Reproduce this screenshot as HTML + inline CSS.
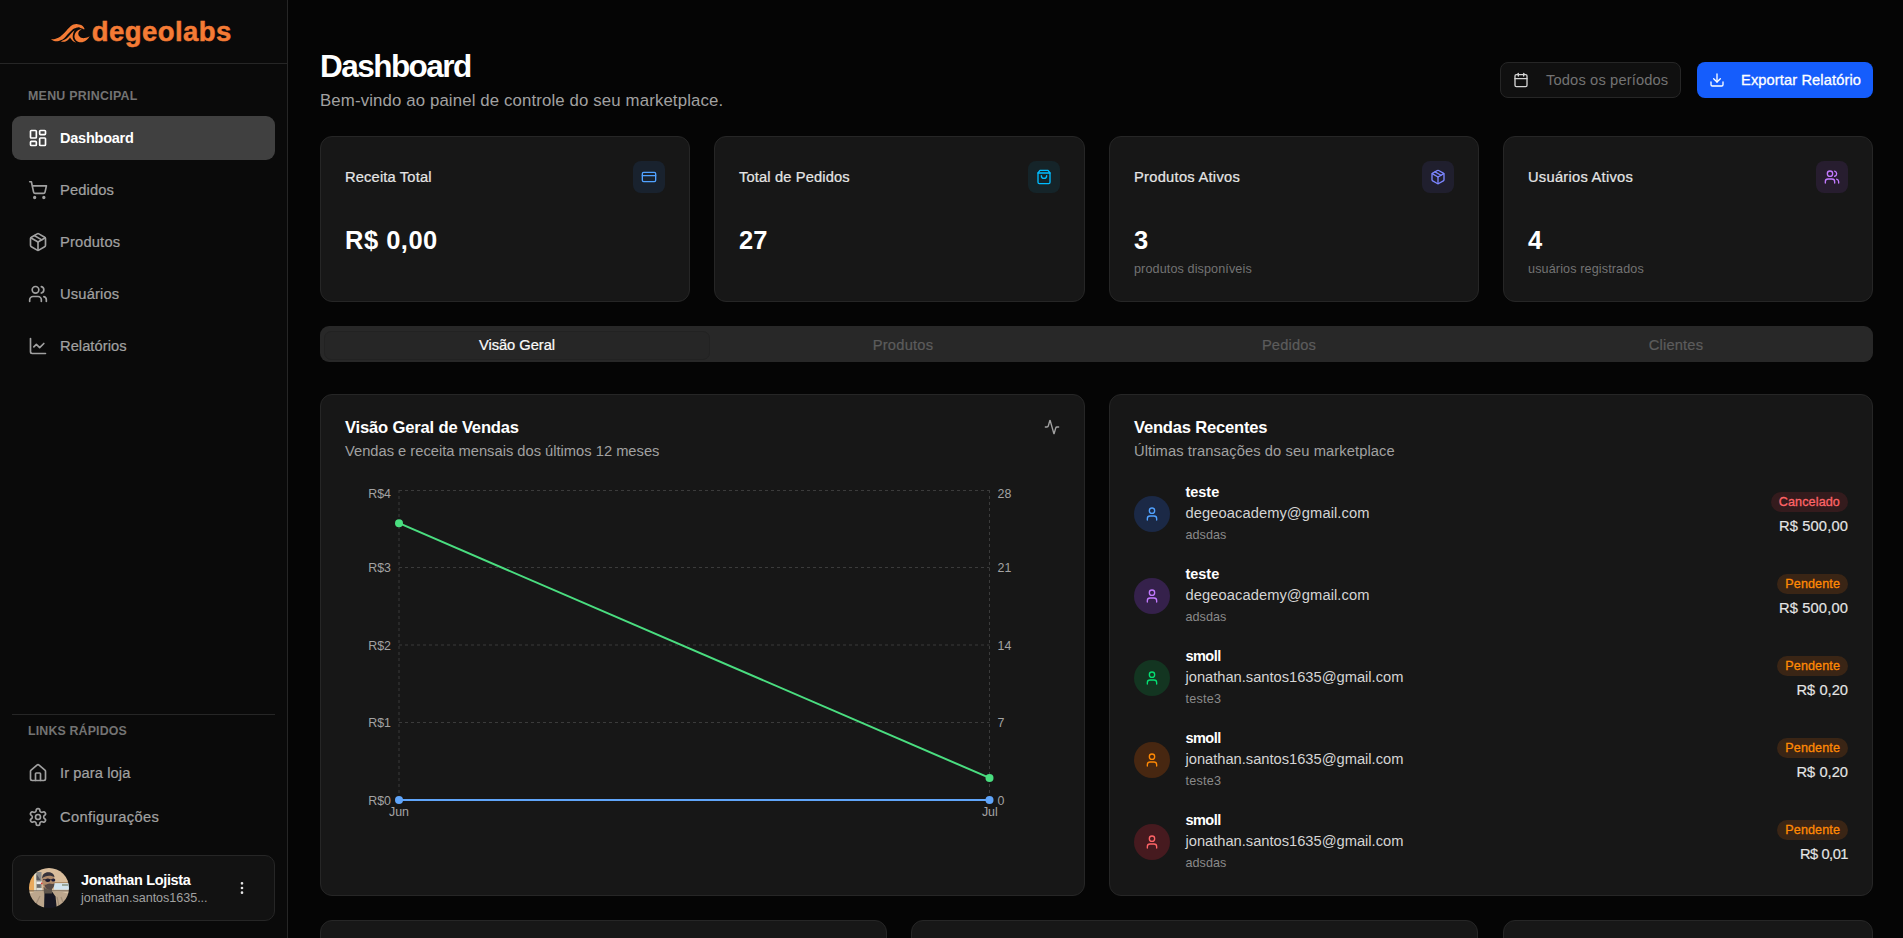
<!DOCTYPE html>
<html lang="pt-BR">
<head>
<meta charset="utf-8">
<title>Dashboard - degeolabs</title>
<style>
*{box-sizing:border-box;margin:0;padding:0}
html,body{width:1903px;height:938px;overflow:hidden;background:#050505}
body{font-family:"Liberation Sans",sans-serif;color:#fafafa;position:relative;-webkit-font-smoothing:antialiased}
.abs,.t{position:absolute;white-space:nowrap}
.t{line-height:20px}
svg.ic{position:absolute;fill:none;stroke:currentColor;stroke-width:2;stroke-linecap:round;stroke-linejoin:round}
#sidebar{position:absolute;left:0;top:0;width:288px;height:938px;background:#0a0a0a;border-right:1px solid #262626}
#sidebar .hdr{position:absolute;left:0;top:0;width:287px;height:64px;border-bottom:1px solid #262626}
.sec{font-size:12.4px;font-weight:700;color:#737373;line-height:16px}
.med{-webkit-text-stroke:.3px currentColor}
.nav{font-size:14.7px;font-weight:400;color:#a1a1a1;line-height:20px;-webkit-text-stroke:.22px currentColor}
.nav.on{color:#fff;font-size:14.5px;font-weight:700;-webkit-text-stroke:0}
.navic{color:#a1a1a1}
.card{position:absolute;background:#171717;border:1px solid #262626;border-radius:12px}
.muted{color:#a1a1a1}
.ib{width:32px;height:32px;border-radius:8px}
.st{font-size:14.7px;font-weight:400;color:#e5e5e5;-webkit-text-stroke:.22px currentColor}
.sv{font-size:25.5px;font-weight:700;color:#fff;line-height:32px}
.sd{font-size:12.6px;color:#737373;line-height:16px}
.tab{font-size:14.7px;font-weight:400;color:#5c5c5c;-webkit-text-stroke:.22px currentColor;transform:translateX(-50%)}
.tab.on{color:#fafafa}
.ct{font-size:16.6px;font-weight:700;color:#fff;line-height:24px}
.cs{font-size:14.7px;color:#a1a1a1}
.rn{font-size:14.5px;font-weight:700;color:#fff}
.re{font-size:14.7px;color:#d4d4d4}
.rd{font-size:12.6px;color:#8a8a8a;line-height:16px}
.bd{font-size:12.6px;font-weight:400;-webkit-text-stroke:.3px currentColor;line-height:20px;height:20px;padding:0 8px;border-radius:10px}
.bd.c{color:#ff6467;background:#341b1d}
.bd.p{color:#ff8904;background:#3a2515}
.ra{font-size:14.7px;color:#e5e5e5;-webkit-text-stroke:.15px currentColor}
/*FIT*/
#lg{letter-spacing:0.448px}
#sec1{letter-spacing:0.278px}
#n1{letter-spacing:-0.231px}
#n2{letter-spacing:0.137px}
#n3{letter-spacing:0.186px}
#n4{letter-spacing:0.176px}
#n5{letter-spacing:0.042px}
#sec2{letter-spacing:0.143px}
#n6{letter-spacing:0.090px}
#n7{letter-spacing:0.340px}
#un{letter-spacing:-0.361px}
#ue{letter-spacing:-0.041px}
#h1{letter-spacing:-1.529px}
#sub{letter-spacing:0.133px}
#per{letter-spacing:0.136px}
#exp{letter-spacing:0.090px}
#s1{letter-spacing:0.155px}
#v1{letter-spacing:0.498px}
#s2{letter-spacing:0.139px}
#v2{letter-spacing:0.025px}
#s3{letter-spacing:0.267px}
#v3{letter-spacing:0.000px}
#d3{letter-spacing:0.115px}
#s4{letter-spacing:0.255px}
#v4{letter-spacing:0.000px}
#d4{letter-spacing:0.126px}
#t1{letter-spacing:-0.038px}
#t2{letter-spacing:0.229px}
#t3{letter-spacing:0.154px}
#t4{letter-spacing:0.175px}
#c1t{letter-spacing:-0.181px}
#c1s{letter-spacing:0.002px}
#c2t{letter-spacing:-0.215px}
#c2s{letter-spacing:0.098px}
#rn0{letter-spacing:-0.040px}
#rn1{letter-spacing:-0.040px}
#rn2{letter-spacing:-0.544px}
#rn3{letter-spacing:-0.544px}
#rn4{letter-spacing:-0.544px}
#re0{letter-spacing:0.077px}
#re1{letter-spacing:0.077px}
#re2{letter-spacing:-0.011px}
#re3{letter-spacing:-0.011px}
#re4{letter-spacing:-0.011px}
#rd0{letter-spacing:0.055px}
#rd1{letter-spacing:0.055px}
#rd2{letter-spacing:0.217px}
#rd3{letter-spacing:0.217px}
#rd4{letter-spacing:0.055px}
#bd0{letter-spacing:0.110px}
#bd1{letter-spacing:0.095px}
#bd2{letter-spacing:0.095px}
#bd3{letter-spacing:0.095px}
#bd4{letter-spacing:0.095px}
#ra0{letter-spacing:0.140px}
#ra1{letter-spacing:0.140px}
#ra2{letter-spacing:0.008px}
#ra3{letter-spacing:0.008px}
#ra4{letter-spacing:-0.492px}
/*ENDFIT*/
</style>
</head>
<body>

<!-- SIDEBAR -->
<div id="sidebar">
  <div class="hdr"></div>
  <svg class="abs" style="left:46px;top:18px" width="60" height="30" viewBox="0 0 60 30"><path fill="#f47b35" d="M4.80 21.30C5.50 21.25 7.67 21.28 9.00 21.00C10.33 20.72 11.63 20.27 12.80 19.60C13.97 18.93 14.93 17.95 16.00 17.00C17.07 16.05 17.82 15.32 19.20 13.90C20.58 12.48 22.92 9.72 24.30 8.50C25.68 7.28 26.43 7.03 27.50 6.60C28.57 6.17 29.42 5.82 30.70 5.90C31.98 5.98 34.03 6.55 35.20 7.10C36.37 7.65 37.15 8.55 37.70 9.20C38.25 9.85 38.47 10.62 38.50 11.00C38.53 11.38 38.00 11.42 37.90 11.50C37.60 11.35 36.77 10.90 36.10 10.60C35.43 10.30 34.58 9.90 33.90 9.70C33.22 9.50 32.97 9.25 32.00 9.40C31.03 9.55 29.60 9.67 28.10 10.60C26.60 11.53 24.70 13.35 23.00 15.00C21.30 16.65 19.60 19.17 17.90 20.50C16.20 21.83 14.45 22.58 12.80 23.00C11.15 23.42 9.33 23.28 8.00 23.00C6.67 22.72 5.33 21.58 4.80 21.30Z M14.70 23.50C15.67 23.00 18.68 21.92 20.50 20.50C22.32 19.08 24.22 16.42 25.60 15.00C26.98 13.58 28.27 12.50 28.80 12.00C28.53 12.57 27.55 14.20 27.20 15.40C26.85 16.60 26.53 17.97 26.70 19.20C26.87 20.43 27.53 21.87 28.20 22.80C28.87 23.73 30.28 24.47 30.70 24.80C30.17 24.60 28.45 24.23 27.50 23.60C26.55 22.97 25.58 21.68 25.00 21.00C24.42 20.32 24.17 19.75 24.00 19.50C23.67 19.92 22.92 21.28 22.00 22.00C21.08 22.72 19.72 23.55 18.50 23.80C17.28 24.05 15.33 23.55 14.70 23.50Z M36.10 11.20C35.42 11.37 33.12 11.57 32.00 12.20C30.88 12.83 29.98 13.83 29.40 15.00C28.82 16.17 28.28 17.87 28.50 19.20C28.72 20.53 29.58 22.15 30.70 23.00C31.82 23.85 33.65 24.40 35.20 24.30C36.75 24.20 38.52 23.47 40.00 22.40C41.48 21.33 43.42 18.65 44.10 17.90C43.42 18.22 41.33 19.43 40.00 19.80C38.67 20.17 37.22 20.37 36.10 20.10C34.98 19.83 33.93 18.98 33.30 18.20C32.67 17.42 32.25 16.30 32.30 15.40C32.35 14.50 32.97 13.50 33.60 12.80C34.23 12.10 35.68 11.47 36.10 11.20Z"/></svg>
  <div class="t" id="lg" style="left:91.7px;top:14px;font-size:27.5px;font-weight:700;line-height:36px;color:#f47b35;-webkit-text-stroke:.5px #f47b35">degeolabs</div>

  <div class="t sec" id="sec1" style="left:28px;top:88px">MENU PRINCIPAL</div>

  <div class="abs" style="left:12px;top:116px;width:263px;height:44px;border-radius:9px;background:#404040"></div>
  <svg class="ic" style="left:28px;top:128px;color:#fff" width="20" height="20" viewBox="0 0 24 24"><rect width="7" height="9" x="3" y="3" rx="1"/><rect width="7" height="5" x="14" y="3" rx="1"/><rect width="7" height="9" x="14" y="12" rx="1"/><rect width="7" height="5" x="3" y="16" rx="1"/></svg>
  <div class="t nav on" id="n1" style="left:60px;top:128px">Dashboard</div>

  <svg class="ic navic" style="left:28px;top:180px" width="20" height="20" viewBox="0 0 24 24"><circle cx="8" cy="21" r="1"/><circle cx="19" cy="21" r="1"/><path d="M2.05 2.050h2l2.660 12.420a2 2 0 0 0 2 1.580h9.780a2 2 0 0 0 1.950-1.570l1.650-7.430H5.120"/></svg>
  <div class="t nav" id="n2" style="left:60px;top:180px">Pedidos</div>

  <svg class="ic navic" style="left:28px;top:232px" width="20" height="20" viewBox="0 0 24 24"><path d="m7.500 4.270 9 5.150"/><path d="M21 8a2 2 0 0 0-1-1.730l-7-4a2 2 0 0 0-2 0l-7 4A2 2 0 0 0 3 8v8a2 2 0 0 0 1 1.730l7 4a2 2 0 0 0 2 0l7-4A2 2 0 0 0 21 16Z"/><path d="m3.300 7 8.700 5 8.700-5"/><path d="M12 22V12"/></svg>
  <div class="t nav" id="n3" style="left:60px;top:232px">Produtos</div>

  <svg class="ic navic" style="left:28px;top:284px" width="20" height="20" viewBox="0 0 24 24"><path d="M16 21v-2a4 4 0 0 0-4-4H6a4 4 0 0 0-4 4v2"/><circle cx="9" cy="7" r="4"/><path d="M22 21v-2a4 4 0 0 0-3-3.870"/><path d="M16 3.130a4 4 0 0 1 0 7.750"/></svg>
  <div class="t nav" id="n4" style="left:60px;top:284px">Usuários</div>

  <svg class="ic navic" style="left:28px;top:336px" width="20" height="20" viewBox="0 0 24 24"><path d="M3 3v16a2 2 0 0 0 2 2h16"/><path d="m19 9-5 5-4-4-3 3"/></svg>
  <div class="t nav" id="n5" style="left:60px;top:336px">Relatórios</div>

  <div class="abs" style="left:12px;top:714px;width:263px;height:1px;background:#262626"></div>
  <div class="t sec" id="sec2" style="left:28px;top:723px">LINKS RÁPIDOS</div>

  <svg class="ic navic" style="left:28px;top:763px" width="20" height="20" viewBox="0 0 24 24"><path d="M15 21v-8a1 1 0 0 0-1-1h-4a1 1 0 0 0-1 1v8"/><path d="M3 10a2 2 0 0 1 .709-1.528l7-5.999a2 2 0 0 1 2.582 0l7 5.999A2 2 0 0 1 21 10v9a2 2 0 0 1-2 2H5a2 2 0 0 1-2-2z"/></svg>
  <div class="t nav" id="n6" style="left:60px;top:763px">Ir para loja</div>

  <svg class="ic navic" style="left:28px;top:807px" width="20" height="20" viewBox="0 0 24 24"><path d="M12.220 2h-.440a2 2 0 0 0-2 2v.180a2 2 0 0 1-1 1.730l-.430.250a2 2 0 0 1-2 0l-.150-.080a2 2 0 0 0-2.730.730l-.220.380a2 2 0 0 0 .730 2.730l.150.100a2 2 0 0 1 1 1.720v.510a2 2 0 0 1-1 1.740l-.150.090a2 2 0 0 0-.730 2.730l.220.380a2 2 0 0 0 2.730.730l.150-.080a2 2 0 0 1 2 0l.430.250a2 2 0 0 1 1 1.730V20a2 2 0 0 0 2 2h.440a2 2 0 0 0 2-2v-.180a2 2 0 0 1 1-1.730l.430-.250a2 2 0 0 1 2 0l.150.080a2 2 0 0 0 2.730-.730l.220-.390a2 2 0 0 0-.730-2.730l-.150-.080a2 2 0 0 1-1-1.740v-.500a2 2 0 0 1 1-1.740l.150-.090a2 2 0 0 0 .730-2.730l-.220-.380a2 2 0 0 0-2.730-.730l-.150.080a2 2 0 0 1-2 0l-.430-.250a2 2 0 0 1-1-1.730V4a2 2 0 0 0-2-2z"/><circle cx="12" cy="12" r="3"/></svg>
  <div class="t nav" id="n7" style="left:60px;top:807px">Configurações</div>

  <div class="abs" style="left:12px;top:855px;width:263px;height:66px;border-radius:10px;background:#121212;border:1px solid #262626"></div>
  <!-- avatar -->
  <svg class="abs" style="left:29px;top:868px" width="40" height="40" viewBox="0 0 40 40">
    <defs><clipPath id="avc"><circle cx="20" cy="20" r="20"/></clipPath><filter id="avb" x="-10%" y="-10%" width="120%" height="120%"><feGaussianBlur stdDeviation="0.550"/></filter></defs>
    <g clip-path="url(#avc)"><g filter="url(#avb)">
      <rect x="-2" y="-2" width="44" height="44" fill="#d9bd9c"/>
      <rect x="-2" y="7" width="7" height="18" fill="#e9a95c"/>
      <rect x="5" y="3" width="2.500" height="21" fill="#e6dcc2"/>
      <rect x="7.500" y="4" width="5" height="19" fill="#8a8a88"/>
      <path d="M7.500 6l4 6h-4z" fill="#55565c"/>
      <rect x="7.500" y="13.500" width="5.500" height="2.500" fill="#ececec"/>
      <rect x="8" y="16.500" width="3.500" height="3" fill="#6b6b6b"/>
      <rect x="7.500" y="20" width="5.500" height="3" fill="#dcdcd6"/>
      <rect x="24" y="14" width="18" height="1.200" fill="#b08c66"/>
      <rect x="25" y="15.200" width="17" height="6.500" fill="#d3e4ee"/>
      <rect x="33" y="16" width="6" height="2" fill="#9aa79a"/>
      <rect x="-2" y="22.300" width="44" height="1.300" fill="#75685c"/>
      <rect x="-2" y="23.600" width="44" height="2" fill="#d8c4a8"/>
      <path d="M-2 42V27c4-2.500 9-3.500 14.500-4l3 1h9l3-1c5 .5 10 2 14.500 4v15z" fill="#bca68d"/>
      <path d="M4 42l7-14M31 42l-3-13M36 40l-4-11" stroke="#a08c76" stroke-width="1.200" fill="none"/>
      <path d="M15.500 23.500h7.500l3.500 5 1.500 14H15z" fill="#141620"/>
      <path d="M14.500 19h8.500v6.500h-8z" fill="#5e554d"/>
      <ellipse cx="19.300" cy="13" rx="6.300" ry="8.400" fill="#b08a6b"/>
      <path d="M13.200 10.500c-.3-4 2.300-6.300 6.100-6.300 3.300 0 6 1.800 6.200 5-2-2-9.500-2.600-12.300 1.300z" fill="#34313a"/>
      <ellipse cx="18.800" cy="12.300" rx="2.600" ry="1.700" fill="#11112a"/><ellipse cx="24.300" cy="12" rx="2" ry="1.600" fill="#15173a"/><rect x="14" y="11.300" width="12" height=".800" fill="#2a2838"/>
      <path d="M15.500 16.500c1.500 .8 3.500-1 5-1s3.500 1.200 5-.3c-.2 3.800-2 6.600-5.200 6.600-2.900 0-4.500-2.600-4.800-5.300z" fill="#574a45"/>
      <circle cx="12.700" cy="15.300" r=".900" fill="#e23a36"/>
    </g></g>
  </svg>
  <div class="t" id="un" style="left:81px;top:870px;font-size:14.5px;font-weight:700;color:#fff">Jonathan Lojista</div>
  <div class="t" id="ue" style="left:81px;top:890px;font-size:12.6px;color:#a1a1a1;line-height:16px">jonathan.santos1635...</div>
  <svg class="ic" style="left:234px;top:880px;color:#e5e5e5" width="16" height="16" viewBox="0 0 24 24"><circle cx="12" cy="12" r="1"/><circle cx="12" cy="5" r="1"/><circle cx="12" cy="19" r="1"/></svg>
</div>

<!-- MAIN -->
<div id="main">
  <div class="t" id="h1" style="left:320px;top:46px;font-size:31.5px;font-weight:700;line-height:40px;color:#fff">Dashboard</div>
  <div class="t muted" id="sub" style="left:320px;top:88.5px;font-size:16.8px;line-height:24px">Bem-vindo ao painel de controle do seu marketplace.</div>

  <div class="abs" style="left:1500px;top:62px;width:181px;height:36px;border-radius:8px;background:#101010;border:1px solid #262626"></div>
  <svg class="ic" style="left:1513px;top:72px;color:#d4d4d4" width="16" height="16" viewBox="0 0 24 24"><path d="M8 2v4"/><path d="M16 2v4"/><rect width="18" height="18" x="3" y="4" rx="2"/><path d="M3 10h18"/></svg>
  <div class="t" id="per" style="left:1546px;top:70px;font-size:14.7px;color:#737373">Todos os períodos</div>

  <div class="abs" style="left:1697px;top:62px;width:176px;height:36px;border-radius:8px;background:#155dfc"></div>
  <svg class="ic" style="left:1709px;top:72px;color:#fff" width="16" height="16" viewBox="0 0 24 24"><path d="M21 15v4a2 2 0 0 1-2 2H5a2 2 0 0 1-2-2v-4"/><polyline points="7 10 12 15 17 10"/><line x1="12" x2="12" y1="15" y2="3"/></svg>
  <div class="t" id="exp" style="left:1741px;top:70px;font-size:14.7px;font-weight:400;-webkit-text-stroke:.3px #fff;color:#fff">Exportar Relatório</div>

  <!-- STAT CARDS -->
  <div class="card" style="left:320px;top:136px;width:370px;height:166px"></div>
  <div class="t st" id="s1" style="left:345px;top:167px">Receita Total</div>
  <div class="abs ib" style="left:633px;top:161px;background:#19222e"></div>
  <svg class="ic" style="left:641px;top:169px;color:#51a2ff" width="16" height="16" viewBox="0 0 24 24"><rect width="20" height="14" x="2" y="5" rx="2"/><line x1="2" x2="22" y1="10" y2="10"/></svg>
  <div class="t sv" id="v1" style="left:345px;top:224px">R$ 0,00</div>

  <div class="card" style="left:714px;top:136px;width:371px;height:166px"></div>
  <div class="t st" id="s2" style="left:739px;top:167px">Total de Pedidos</div>
  <div class="abs ib" style="left:1028px;top:161px;background:#152429"></div>
  <svg class="ic" style="left:1036px;top:169px;color:#00bcff" width="16" height="16" viewBox="0 0 24 24"><path d="M6 2 3 6v14a2 2 0 0 0 2 2h14a2 2 0 0 0 2-2V6l-3-4Z"/><path d="M3 6h18"/><path d="M16 10a4 4 0 0 1-8 0"/></svg>
  <div class="t sv" id="v2" style="left:739px;top:224px">27</div>

  <div class="card" style="left:1109px;top:136px;width:370px;height:166px"></div>
  <div class="t st" id="s3" style="left:1134px;top:167px">Produtos Ativos</div>
  <div class="abs ib" style="left:1422px;top:161px;background:#201f2e"></div>
  <svg class="ic" style="left:1430px;top:169px;color:#7c86ff" width="16" height="16" viewBox="0 0 24 24"><path d="m7.500 4.270 9 5.150"/><path d="M21 8a2 2 0 0 0-1-1.730l-7-4a2 2 0 0 0-2 0l-7 4A2 2 0 0 0 3 8v8a2 2 0 0 0 1 1.730l7 4a2 2 0 0 0 2 0l7-4A2 2 0 0 0 21 16Z"/><path d="m3.300 7 8.700 5 8.700-5"/><path d="M12 22V12"/></svg>
  <div class="t sv" id="v3" style="left:1134px;top:224px">3</div>
  <div class="t sd" id="d3" style="left:1134px;top:260.5px">produtos disponíveis</div>

  <div class="card" style="left:1503px;top:136px;width:370px;height:166px"></div>
  <div class="t st" id="s4" style="left:1528px;top:167px">Usuários Ativos</div>
  <div class="abs ib" style="left:1816px;top:161px;background:#271d2f"></div>
  <svg class="ic" style="left:1824px;top:169px;color:#c27aff" width="16" height="16" viewBox="0 0 24 24"><path d="M16 21v-2a4 4 0 0 0-4-4H6a4 4 0 0 0-4 4v2"/><circle cx="9" cy="7" r="4"/><path d="M22 21v-2a4 4 0 0 0-3-3.870"/><path d="M16 3.130a4 4 0 0 1 0 7.750"/></svg>
  <div class="t sv" id="v4" style="left:1528px;top:224px">4</div>
  <div class="t sd" id="d4" style="left:1528px;top:260.5px">usuários registrados</div>

  <!-- TABS -->
  <div class="abs" style="left:320px;top:326px;width:1553px;height:36px;border-radius:9px;background:#282828"></div>
  <div class="abs" style="left:324px;top:331px;width:386px;height:29px;border-radius:7px;background:#262626;border:1px solid #222"></div>
  <div class="t tab on" id="t1" style="left:517px;top:335px">Visão Geral</div>
  <div class="t tab" id="t2" style="left:903px;top:335px">Produtos</div>
  <div class="t tab" id="t3" style="left:1289px;top:335px">Pedidos</div>
  <div class="t tab" id="t4" style="left:1676px;top:335px">Clientes</div>
  <!-- CHART CARD -->
  <div class="card" style="left:320px;top:394px;width:765px;height:502px"></div>
  <div class="t ct" id="c1t" style="left:345px;top:416px">Visão Geral de Vendas</div>
  <div class="t cs" id="c1s" style="left:345px;top:441px">Vendas e receita mensais dos últimos 12 meses</div>
  <svg class="ic" style="left:1044px;top:419px;color:#a1a1a1" width="16" height="16" viewBox="0 0 24 24"><path d="M22 12h-2.480a2 2 0 0 0-1.930 1.460l-2.350 8.360a.250.250 0 0 1-.480 0L9.240 2.180a.250.250 0 0 0-.480 0l-2.350 8.360A2 2 0 0 1 4.490 12H2"/></svg>
  <svg class="abs" style="left:345px;top:470px" width="716" height="360" viewBox="345 470 716 360" font-family="Liberation Sans, sans-serif" font-size="12.400" fill="#a3a3a3">
    <g stroke="#3b3b3b" stroke-width="1" stroke-dasharray="3 3" fill="none">
      <line x1="399" x2="989.500" y1="490.500" y2="490.500"/><line x1="399" x2="989.500" y1="567.500" y2="567.500"/><line x1="399" x2="989.500" y1="645" y2="645"/><line x1="399" x2="989.500" y1="722.500" y2="722.500"/><line x1="399" x2="989.500" y1="800" y2="800"/>
      <line x1="399" x2="399" y1="490" y2="800"/><line x1="989.500" x2="989.500" y1="490" y2="800"/>
    </g>
    <g text-anchor="end">
      <text x="391" y="498">R$4</text><text x="391" y="572">R$3</text><text x="391" y="649.500">R$2</text><text x="391" y="727">R$1</text><text x="391" y="804.500">R$0</text>
    </g>
    <g text-anchor="start">
      <text x="997.500" y="498">28</text><text x="997.500" y="572">21</text><text x="997.500" y="649.500">14</text><text x="997.500" y="727">7</text><text x="997.500" y="804.500">0</text>
    </g>
    <g text-anchor="middle"><text x="399" y="816">Jun</text><text x="989.800" y="816">Jul</text></g>
    <path d="M399 800H989.500" stroke="#60a5fa" stroke-width="2" fill="none"/>
    <path d="M399 523.200L989.500 777.900" stroke="#4ade80" stroke-width="2" fill="none"/>
    <g fill="#60a5fa"><circle cx="399" cy="800" r="4"/><circle cx="989.500" cy="800" r="4"/></g>
    <g fill="#4ade80"><circle cx="399" cy="523.200" r="4"/><circle cx="989.500" cy="777.900" r="4"/></g>
  </svg>

  <!-- RECENT SALES -->
  <div class="card" style="left:1109px;top:394px;width:764px;height:502px"></div>
  <div class="t ct" id="c2t" style="left:1134px;top:416px">Vendas Recentes</div>
  <div class="t cs" id="c2s" style="left:1134px;top:441px">Últimas transações do seu marketplace</div>
  <div class="abs" style="left:1134px;top:496px;width:36px;height:36px;border-radius:50%;background:#1b2946"></div>
  <svg class="ic" style="left:1144px;top:506px;color:#51a2ff" width="16" height="16" viewBox="0 0 24 24"><path d="M19 21v-2a4 4 0 0 0-4-4H9a4 4 0 0 0-4 4v2"/><circle cx="12" cy="7" r="4"/></svg>
  <div class="t rn" id="rn0" style="left:1185.5px;top:482px">teste</div>
  <div class="t re" id="re0" style="left:1185.5px;top:503px">degeoacademy@gmail.com</div>
  <div class="t rd" id="rd0" style="left:1185.5px;top:526.5px">adsdas</div>
  <div class="t bd c" id="bd0" style="right:55px;top:492px">Cancelado</div>
  <div class="t ra" id="ra0" style="right:55px;top:516px">R$ 500,00</div>
  <div class="abs" style="left:1134px;top:578px;width:36px;height:36px;border-radius:50%;background:#35214b"></div>
  <svg class="ic" style="left:1144px;top:588px;color:#c27aff" width="16" height="16" viewBox="0 0 24 24"><path d="M19 21v-2a4 4 0 0 0-4-4H9a4 4 0 0 0-4 4v2"/><circle cx="12" cy="7" r="4"/></svg>
  <div class="t rn" id="rn1" style="left:1185.5px;top:564px">teste</div>
  <div class="t re" id="re1" style="left:1185.5px;top:585px">degeoacademy@gmail.com</div>
  <div class="t rd" id="rd1" style="left:1185.5px;top:608.5px">adsdas</div>
  <div class="t bd p" id="bd1" style="right:55px;top:574px">Pendente</div>
  <div class="t ra" id="ra1" style="right:55px;top:598px">R$ 500,00</div>
  <div class="abs" style="left:1134px;top:660px;width:36px;height:36px;border-radius:50%;background:#133521"></div>
  <svg class="ic" style="left:1144px;top:670px;color:#05df72" width="16" height="16" viewBox="0 0 24 24"><path d="M19 21v-2a4 4 0 0 0-4-4H9a4 4 0 0 0-4 4v2"/><circle cx="12" cy="7" r="4"/></svg>
  <div class="t rn" id="rn2" style="left:1185.5px;top:646px">smoll</div>
  <div class="t re" id="re2" style="left:1185.5px;top:667px">jonathan.santos1635@gmail.com</div>
  <div class="t rd" id="rd2" style="left:1185.5px;top:690.5px">teste3</div>
  <div class="t bd p" id="bd2" style="right:55px;top:656px">Pendente</div>
  <div class="t ra" id="ra2" style="right:55px;top:680px">R$ 0,20</div>
  <div class="abs" style="left:1134px;top:742px;width:36px;height:36px;border-radius:50%;background:#472711"></div>
  <svg class="ic" style="left:1144px;top:752px;color:#ff8904" width="16" height="16" viewBox="0 0 24 24"><path d="M19 21v-2a4 4 0 0 0-4-4H9a4 4 0 0 0-4 4v2"/><circle cx="12" cy="7" r="4"/></svg>
  <div class="t rn" id="rn3" style="left:1185.5px;top:728px">smoll</div>
  <div class="t re" id="re3" style="left:1185.5px;top:749px">jonathan.santos1635@gmail.com</div>
  <div class="t rd" id="rd3" style="left:1185.5px;top:772.5px">teste3</div>
  <div class="t bd p" id="bd3" style="right:55px;top:738px">Pendente</div>
  <div class="t ra" id="ra3" style="right:55px;top:762px">R$ 0,20</div>
  <div class="abs" style="left:1134px;top:824px;width:36px;height:36px;border-radius:50%;background:#461a1f"></div>
  <svg class="ic" style="left:1144px;top:834px;color:#ff6467" width="16" height="16" viewBox="0 0 24 24"><path d="M19 21v-2a4 4 0 0 0-4-4H9a4 4 0 0 0-4 4v2"/><circle cx="12" cy="7" r="4"/></svg>
  <div class="t rn" id="rn4" style="left:1185.5px;top:810px">smoll</div>
  <div class="t re" id="re4" style="left:1185.5px;top:831px">jonathan.santos1635@gmail.com</div>
  <div class="t rd" id="rd4" style="left:1185.5px;top:854.5px">adsdas</div>
  <div class="t bd p" id="bd4" style="right:55px;top:820px">Pendente</div>
  <div class="t ra" id="ra4" style="right:55px;top:844px">R$ 0,01</div>

  <!-- BOTTOM ROW -->
  <div class="card" style="left:320px;top:920px;width:567px;height:60px"></div>
  <div class="card" style="left:911px;top:920px;width:567px;height:60px"></div>
  <div class="card" style="left:1503px;top:920px;width:370px;height:60px"></div>
</div>

</body>
</html>
